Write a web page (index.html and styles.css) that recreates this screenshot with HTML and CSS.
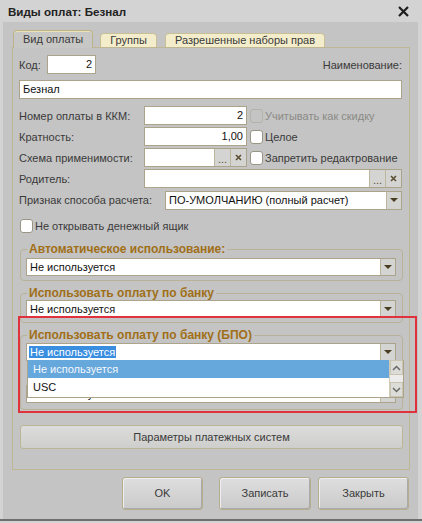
FILE: index.html
```html
<!DOCTYPE html>
<html lang="ru">
<head>
    <meta charset="UTF-8">
    <title>Виды оплат: Безнал</title>
    <link rel="stylesheet" href="styles.css">
</head>
<body>
    <div class="window">
        <div class="titlebar">
            <span class="title">Виды оплат: Безнал</span>
            <svg class="close" width="11" height="11" viewBox="0 0 11 11">
                <path d="M1 1L10 10M10 1L1 10" stroke="#1e1e1e" stroke-width="2.2" fill="none"/>
            </svg>
        </div>

        <div class="client">
            <div class="tabs">
                <div class="tab active">Вид оплаты</div>
                <div class="tab">Группы</div>
                <div class="tab">Разрешенные наборы прав</div>
            </div>

            <div class="panel">
                <div class="row">
                    <span class="label code-label">Код:</span>
                    <div class="field code"><span class="val num">2</span></div>
                    <span class="grow"></span>
                    <span class="label">Наименование:</span>
                </div>

                <div class="row gap6">
                    <div class="field wide"><span class="val">Безнал</span></div>
                </div>

                <div class="row gap7">
                    <span class="label col">Номер оплаты в ККМ:</span>
                    <div class="field short"><span class="val num">2</span></div>
                    <span class="check disabled"></span>
                    <span class="check-text disabled-text">Учитывать как скидку</span>
                </div>

                <div class="row gap2">
                    <span class="label col">Кратность:</span>
                    <div class="field short"><span class="val num">1,00</span></div>
                    <span class="check"></span>
                    <span class="check-text">Целое</span>
                </div>

                <div class="row gap2">
                    <span class="label col">Схема применимости:</span>
                    <div class="field short">
                        <span class="val"></span>
                        <span class="fbtn dots">...</span>
                        <span class="fbtn"><svg width="7" height="7" viewBox="0 0 7 7"><path d="M1 1L6 6M6 1L1 6" stroke="#5c4e34" stroke-width="1.6"/></svg></span>
                    </div>
                    <span class="check"></span>
                    <span class="check-text">Запретить редактрование</span>
                </div>

                <div class="row gap2">
                    <span class="label col">Родитель:</span>
                    <div class="field grow">
                        <span class="val"></span>
                        <span class="fbtn dots">...</span>
                        <span class="fbtn"><svg width="7" height="7" viewBox="0 0 7 7"><path d="M1 1L6 6M6 1L1 6" stroke="#5c4e34" stroke-width="1.6"/></svg></span>
                    </div>
                </div>

                <div class="row gap2 tall">
                    <span class="label calc-label">Признак способа расчета:</span>
                    <div class="field grow">
                        <span class="val">ПО-УМОЛЧАНИЮ (полный расчет)</span>
                        <span class="fbtn drop"><i class="tri"></i></span>
                    </div>
                </div>

                <div class="row check-row">
                    <span class="check first"></span>
                    <span class="check-text">Не открывать денежный ящик</span>
                </div>

                <fieldset class="group g1">
                    <legend>Автоматическое использование:</legend>
                    <div class="field select">
                        <span class="val">Не используется</span>
                        <span class="fbtn drop"><i class="tri"></i></span>
                    </div>
                </fieldset>

                <fieldset class="group g2">
                    <legend>Использовать оплату по банку</legend>
                    <div class="field select">
                        <span class="val">Не используется</span>
                        <span class="fbtn drop"><i class="tri"></i></span>
                    </div>
                </fieldset>

                <fieldset class="group g3">
                    <legend>Использовать оплату по банку (БПО)</legend>
                    <div class="field select">
                        <span class="val"><span class="selected">Не используется</span></span>
                        <span class="fbtn drop"><i class="tri"></i></span>
                    </div>
                    <div class="field select second">
                        <span class="val">Не используется</span>
                        <span class="fbtn drop"><i class="tri"></i></span>
                    </div>
                </fieldset>

                <div class="wide-btn">Параметры платежных систем</div>
            </div>

            <div class="footer">
                <div class="btn ok">OK</div>
                <div class="btn save">Записать</div>
                <div class="btn close-btn">Закрыть</div>
            </div>
        </div>

        <!-- open dropdown of the BPO field -->
        <div class="dropdown">
            <div class="items">
                <div class="item current">Не используется</div>
                <div class="item">USC</div>
            </div>
            <div class="scroll">
                <span class="arrow"><svg width="9" height="6" viewBox="0 0 9 6"><path d="M1 5L4.5 1.5L8 5" stroke="#6a6a6a" stroke-width="1.5" fill="none"/></svg></span>
                <span class="track"></span>
                <span class="arrow"><svg width="9" height="6" viewBox="0 0 9 6"><path d="M1 1L4.5 4.5L8 1" stroke="#6a6a6a" stroke-width="1.5" fill="none"/></svg></span>
            </div>
        </div>

        <div class="mark"></div>
    </div>
</body>
</html>
```

FILE: styles.css
```css
* {
    margin: 0;
    padding: 0;
    box-sizing: border-box;
}

body {
    width: 422px;
    height: 523px;
    overflow: hidden;
    background-color: #d3d3d3;
    font-family: 'Liberation Sans', Arial, sans-serif;
    font-size: 11px;
    color: #3a3a3a;
}

.window {
    position: relative;
    width: 422px;
    height: 521px;
    background-color: #d3d3d3;
    border-bottom: 2px solid #6e6e6e;
}

.titlebar {
    height: 22px;
    display: flex;
    align-items: center;
    justify-content: space-between;
    padding: 1px 13px 0 8px;
}

.title {
    font-size: 11.6px;
    font-weight: bold;
    color: #222;
}

.client {
    margin: 0 4px 0 3px;
    height: 497px;
    background-color: #c4c4c4;
    padding: 8px 9px 0 9px;
}

/* tabs */

.tabs {
    display: flex;
    align-items: flex-end;
    height: 17px;
    margin-left: 1px;
    gap: 7px;
}

.tab {
    height: 14px;
    padding: 0 9px;
    line-height: 13px;
    background-color: #f3edcb;
    border: 1px solid #c8bf97;
    border-bottom: none;
    border-radius: 4px 4px 0 0;
}

.tab + .tab + .tab {
    margin-left: 1px;
}

.tab.active {
    height: 18px;
    line-height: 17px;
    background-color: #c7c7c5;
    border-color: #bdb48c;
    box-shadow: inset 0 1px #ebe2b8;
    position: relative;
    z-index: 1;
    margin-bottom: -1px;
}

/* main panel */

.panel {
    width: 398px;
    height: 423px;
    border: 1px solid #bfb794;
    padding: 7px 7px 0 6px;
    display: flex;
    flex-direction: column;
}

.row {
    display: flex;
    align-items: center;
    height: 19px;
}

.gap2 { margin-top: 2px; }
.gap6 { margin-top: 6px; }
.gap7 { margin-top: 7px; }

.row.tall {
    height: 20px;
}

.label {
    white-space: nowrap;
}

.code-label {
    width: 28px;
}

.col {
    width: 125px;
}

.calc-label {
    width: 146px;
}

.grow {
    flex: 1;
}

.field {
    display: flex;
    height: 19px;
    background-color: white;
    border: 1px solid #aba48b;
    color: #111;
}

.field .val {
    flex: 1;
    padding: 0 3px;
    line-height: 17px;
    white-space: nowrap;
    overflow: hidden;
}

.field .num {
    text-align: right;
}

.code { width: 49px; }
.wide { width: 383px; }
.short { width: 103px; }

.fbtn {
    width: 16px;
    display: flex;
    align-items: center;
    justify-content: center;
    background-color: #d4d4d2;
    border-left: 1px solid #bdb69c;
    color: #5c4e34;
}

.fbtn.dots {
    align-items: flex-end;
    padding-bottom: 4px;
    line-height: 6px;
    font-size: 11px;
}

.fbtn.drop {
    width: 15px;
}

.tri {
    width: 0;
    height: 0;
    border-left: 4px solid transparent;
    border-right: 4px solid transparent;
    border-top: 4px solid #4a3e22;
}

/* checkboxes */

.check {
    width: 13px;
    height: 14px;
    margin-left: 3px;
    background-color: white;
    border: 1px solid #999686;
    border-radius: 3px;
}

.check.disabled {
    background-color: #c4c4c4;
    border-color: #b3b2ab;
}

.check.first {
    margin-left: 1px;
}

.check-text {
    margin-left: 2px;
    white-space: nowrap;
}

.disabled-text {
    color: #8a8a84;
}

.check-row {
    margin-top: 8px;
    height: 15px;
}

/* groups */

.group {
    margin: 0 -1px 0 1px;
    border: 1px solid #b9b296;
    border-radius: 4px;
    padding: 2px 6px 4px 5px;
}

.group legend {
    margin-left: 1px;
    padding: 0 2px;
    line-height: 13px;
    font-size: 12px;
    font-weight: bold;
    color: #a06f18;
}

.g1 { margin-top: 10px; }
.g2 { margin-top: 6px; padding-top: 0; }
.g3 { margin-top: 6px; padding-top: 1px; padding-bottom: 6px; }

.field.select {
    height: 18px;
}

.field.select .val {
    line-height: 16px;
}

.field.second {
    margin-top: 24px;
}

.selected {
    background-color: #3a8ee0;
    color: white;
    padding: 0 1px;
    margin-left: -1px;
}

.wide-btn {
    margin: 15px -1px 0 1px;
    height: 24px;
    line-height: 22px;
    text-align: center;
    background: linear-gradient(#dcdcda, #cececc);
    border: 1px solid #bdb597;
    border-radius: 3px;
}

/* bottom buttons */

.footer {
    display: flex;
    justify-content: flex-end;
    margin-top: 7px;
}

.btn {
    height: 33px;
    line-height: 31px;
    text-align: center;
    background: linear-gradient(#dedede, #cacaca);
    border: 1px solid #b5ad8e;
    border-radius: 3px;
    box-shadow: inset -1px -1px #aaa, inset 1px 1px #eee;
}

.ok { width: 81px; }
.save { width: 92px; margin-left: 16px; }
.close-btn { width: 91px; margin-left: 7px; }

/* popup list of the BPO select */

.dropdown {
    position: absolute;
    left: 27px;
    top: 360px;
    width: 377px;
    height: 38px;
    display: flex;
    background-color: white;
    border: 1px solid #aba48b;
    border-top: none;
}

.items {
    flex: 1;
}

.item {
    height: 18px;
    line-height: 18px;
    padding-left: 5px;
    color: #111;
}

.item.current {
    background-color: #66a7dc;
    color: #f4f8fc;
}

.scroll {
    width: 14px;
    display: flex;
    flex-direction: column;
    background-color: #ececec;
    border-left: 1px solid #d0cbb8;
}

.arrow {
    height: 15px;
    display: flex;
    align-items: center;
    justify-content: center;
    background-color: #dcdcd8;
    border: 1px solid #c9c4b0;
}

.track {
    flex: 1;
}

.mark {
    position: absolute;
    left: 18px;
    top: 316px;
    width: 399px;
    height: 97px;
    border: 2px solid #e0323c;
}
```
